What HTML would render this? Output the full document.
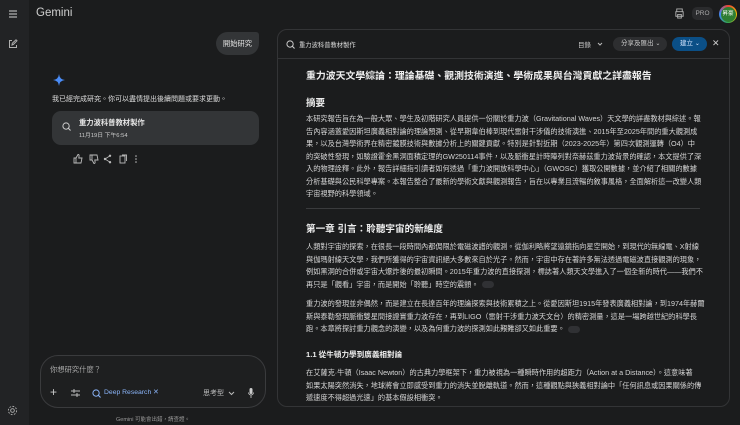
<!DOCTYPE html>
<html><head><meta charset="utf-8"><style>
*{margin:0;padding:0;box-sizing:border-box}
body{width:740px;height:425px;background:#1b1c1d;color:#e3e3e3;font-family:"Liberation Sans","Noto Sans CJK TC",sans-serif;position:relative;overflow:hidden}
.a{position:absolute;white-space:nowrap}
.sb{position:absolute;left:0;top:0;width:29px;height:425px;background:#222325}
.l{position:absolute;left:306px;font-size:7.2px;line-height:12.5px;white-space:nowrap;color:#d6d6d6}
.chip{display:inline-block;width:12px;height:7px;border-radius:4px;background:#303134;vertical-align:middle;margin-left:3px}
svg{position:absolute}
</style></head><body>
<div class="sb"></div>
<svg style="left:8px;top:9px" width="10" height="10" viewBox="0 0 10 10"><path d="M1 2h8M1 5h8M1 8h8" stroke="#b0b0b0" stroke-width="1.2"/></svg>
<svg style="left:8px;top:39px" width="10" height="10" viewBox="0 0 10 10"><path d="M4 1.5H1.5v7h7V6M4 6l.3-1.8L8 .8l1 1-3.6 3.6z" stroke="#b0b0b0" fill="none" stroke-width="1"/></svg>
<svg style="left:7px;top:405px" width="11" height="11" viewBox="0 0 12 12"><circle cx="6" cy="6" r="2" stroke="#b0b0b0" fill="none"/><circle cx="6" cy="6" r="4.5" stroke="#b0b0b0" fill="none" stroke-dasharray="2 1.5"/></svg>
<div class="a" style="left:36px;top:7px;font-size:11.5px;color:#d0d0d0">Gemini</div>
<svg style="left:674px;top:8px" width="11" height="11" viewBox="0 0 12 12"><path d="M3 4V1h6v3M2 4h8v5H2zM4 7h4v4H4z" stroke="#b0b0b0" fill="none"/></svg>
<div class="a" style="left:692px;top:7px;width:21px;height:13px;border-radius:5px;background:#2a2b2d;font-size:6.5px;line-height:13px;text-align:center;color:#aaa">PRO</div>
<div class="a" style="left:719px;top:5px;width:18px;height:18px;border-radius:50%;background:conic-gradient(#ea4335,#fbbc05,#34a853,#4285f4,#ea4335)"></div>
<div class="a" style="left:720.5px;top:6.5px;width:15px;height:15px;border-radius:50%;background:#2e7d32;font-size:5.5px;line-height:15px;text-align:center;color:#fff">昇豪</div>

<div class="a" style="left:216px;top:32px;width:43px;height:23px;border-radius:12px 3px 12px 12px;background:#333537;font-size:7.3px;line-height:23px;text-align:center">開始研究</div>
<svg style="left:53px;top:74px" width="12" height="12" viewBox="0 0 12 12"><path d="M6 0Q6.5 5.5 12 6Q6.5 6.5 6 12Q5.5 6.5 0 6Q5.5 5.5 6 0z" fill="#4a8cf7"/></svg>
<div class="a" style="left:52px;top:94px;font-size:7px;color:#ddd">我已經完成研究。你可以盡情提出後續問題或要求更動。</div>
<div class="a" style="left:52px;top:111px;width:207px;height:34px;border-radius:9px;background:#333537"></div>
<svg style="left:62px;top:122px" width="9" height="9" viewBox="0 0 10 10"><circle cx="4.5" cy="4.5" r="3.5" stroke="#ccc" fill="none" stroke-width="1.1"/><path d="M7 7l2.5 2.5" stroke="#ccc" stroke-width="1.2"/></svg>
<div class="a" style="left:79px;top:118px;font-size:7.3px;font-weight:bold;color:#e6e6e6">重力波科普教材製作</div>
<div class="a" style="left:79px;top:130px;font-size:5.8px;color:#ccc">11月19日 下午6:54</div>
<svg style="left:73px;top:154px" width="70" height="10" viewBox="0 0 70 10"><path d="M1 4h2v5H1zM3 4l2-3.5c1 0 1.3.6 1 2L5.8 4H9l-1 5H3" stroke="#bbb" fill="none" stroke-width=".9"/><path d="M17 1h2v5h-2zM19 6l2 3.5c1 0 1.3-.6 1-2L21.8 6H25l-1-5h-5" stroke="#bbb" fill="none" stroke-width=".9"/><circle cx="32" cy="5" r="1.2" fill="#bbb"/><circle cx="37" cy="1.8" r="1.2" fill="#bbb"/><circle cx="37" cy="8.2" r="1.2" fill="#bbb"/><path d="M32 5l5-3.2M32 5l5 3.2" stroke="#bbb" stroke-width=".8"/><rect x="47" y="2" width="5" height="7" stroke="#bbb" fill="none" stroke-width=".9"/><path d="M49 1h4.5v6" stroke="#bbb" fill="none" stroke-width=".9"/><circle cx="63" cy="2" r=".8" fill="#bbb"/><circle cx="63" cy="5" r=".8" fill="#bbb"/><circle cx="63" cy="8" r=".8" fill="#bbb"/></svg>

<div class="a" style="left:40px;top:355px;width:226px;height:53px;border-radius:18px;border:1px solid #3a3b3d;background:#1e1f20"></div>
<div class="a" style="left:50px;top:365px;font-size:7.3px;color:#a8a8a8">你想研究什麼？</div>
<div class="a" style="left:50px;top:385px;font-size:12px;color:#ccc">+</div>
<svg style="left:71px;top:389px" width="9" height="8" viewBox="0 0 9 8"><path d="M0 2h9M0 6h9" stroke="#bbb"/><path d="M3 0v4M6 4v4" stroke="#bbb"/></svg>
<svg style="left:92px;top:389px" width="9" height="9" viewBox="0 0 10 10"><circle cx="4.5" cy="4.5" r="3.5" stroke="#8ab4f8" fill="none" stroke-width="1.1"/><path d="M7 7l2.5 2.5" stroke="#8ab4f8" stroke-width="1.2"/></svg>
<div class="a" style="left:104px;top:389px;font-size:6.8px;color:#8ab4f8">Deep Research</div>
<div class="a" style="left:153px;top:388px;font-size:7px;color:#8ab4f8">✕</div>
<div class="a" style="left:203px;top:388px;font-size:7px;color:#bbb">思考型</div>
<svg style="left:228px;top:391px" width="7" height="5" viewBox="0 0 7 5"><path d="M1 1l2.5 2.5L6 1" stroke="#bbb" fill="none"/></svg>
<svg style="left:248px;top:388px" width="6" height="10" viewBox="0 0 6 10"><rect x="1.5" y="0" width="3" height="6" rx="1.5" fill="#ccc"/><path d="M.5 4.5a2.5 2.5 0 005 0M3 7v3" stroke="#ccc" fill="none" stroke-width=".8"/></svg>
<div class="a" style="left:116px;top:415px;font-size:5.5px;color:#999">Gemini 可能會出錯，請查證。</div>

<div class="a" style="left:277px;top:29px;width:453px;height:378px;border-radius:10px;border:1px solid #333436;background:#1b1c1d"></div>
<div class="a" style="left:278px;top:58px;width:451px;height:1px;background:#333436"></div>
<svg style="left:286px;top:40px" width="9" height="9" viewBox="0 0 10 10"><circle cx="4.5" cy="4.5" r="3.5" stroke="#ccc" fill="none" stroke-width="1.1"/><path d="M7 7l2.5 2.5" stroke="#ccc" stroke-width="1.2"/></svg>
<div class="a" style="left:299px;top:40px;font-size:6.3px;color:#ddd">重力波科普教材製作</div>
<div class="a" style="left:578px;top:39px;font-size:6.5px;color:#ccc">目錄</div>
<svg style="left:597px;top:42px" width="6" height="4" viewBox="0 0 6 4"><path d="M1 1l2 2 2-2" stroke="#bbb" fill="none"/></svg>
<div class="a" style="left:613px;top:37px;width:54px;height:14px;border-radius:7px;background:#2d2e30;font-size:6.5px;line-height:14px;padding-left:8px;color:#ccc">分享及匯出 <span style="font-size:6px">⌄</span></div>
<div class="a" style="left:672px;top:37px;width:35px;height:14px;border-radius:7px;background:#0b4f86;font-size:6.5px;line-height:14px;padding-left:8px;color:#d6e6ff">建立 <span style="font-size:6px">⌄</span></div>
<div class="a" style="left:712px;top:38px;font-size:9px;color:#ccc">✕</div>

<div class="a" style="left:306px;top:68px;font-size:9.9px;font-weight:bold;color:#eee">重力波天文學綜論：理論基礎、觀測技術演進、學術成果與台灣貢獻之詳盡報告</div>
<div class="a" style="left:306px;top:95px;font-size:9.5px;font-weight:bold;color:#eee">摘要</div>
<div class="l" style="top:113px">本研究報告旨在為一般大眾、學生及初階研究人員提供一份關於重力波（Gravitational Waves）天文學的詳盡教材與綜述。報</div>
<div class="l" style="top:125.5px">告內容涵蓋愛因斯坦廣義相對論的理論預測、從早期韋伯棒到現代雷射干涉儀的技術演進、2015年至2025年間的重大觀測成</div>
<div class="l" style="top:138px">果，以及台灣學術界在精密鍍膜技術與數據分析上的關鍵貢獻。特別是針對近期（2023-2025年）第四次觀測運轉（O4）中</div>
<div class="l" style="top:150.5px">的突破性發現，如驗證霍金黑洞面積定理的GW250114事件，以及脈衝星計時陣列對奈赫茲重力波背景的確認，本文提供了深</div>
<div class="l" style="top:163px">入的物理詮釋。此外，報告詳細指引讀者如何透過「重力波開放科學中心」（GWOSC）獲取公開數據，並介紹了相關的數據</div>
<div class="l" style="top:175.5px">分析基礎與公民科學專案。本報告整合了最新的學術文獻與觀測報告，旨在以專業且流暢的敘事風格，全面解析這一改變人類</div>
<div class="l" style="top:188px">宇宙視野的科學領域。</div>
<div class="a" style="left:306px;top:208px;width:394px;height:1px;background:#3a3b3d"></div>
<div class="a" style="left:306px;top:221px;font-size:9.6px;font-weight:bold;color:#eee">第一章 引言：聆聽宇宙的新維度</div>
<div class="l" style="top:241px">人類對宇宙的探索，在很長一段時間內都侷限於電磁波譜的觀測。從伽利略將望遠鏡指向星空開始，到現代的無線電、X射線</div>
<div class="l" style="top:253.5px">與伽瑪射線天文學，我們所獲得的宇宙資訊絕大多數來自於光子。然而，宇宙中存在著許多無法透過電磁波直接觀測的現象，</div>
<div class="l" style="top:266px">例如黑洞的合併或宇宙大爆炸後的最初瞬間。2015年重力波的直接探測，標誌著人類天文學進入了一個全新的時代——我們不</div>
<div class="l" style="top:278.5px">再只是「觀看」宇宙，而是開始「聆聽」時空的震顫。<span class="chip"></span></div>
<div class="l" style="top:298px">重力波的發現並非偶然，而是建立在長達百年的理論探索與技術累積之上。從愛因斯坦1915年發表廣義相對論，到1974年赫爾</div>
<div class="l" style="top:310.5px">斯與泰勒發現脈衝雙星間接證實重力波存在，再到LIGO（雷射干涉重力波天文台）的精密測量，這是一場跨越世紀的科學長</div>
<div class="l" style="top:323px">跑。本章將探討重力觀念的演變，以及為何重力波的探測如此艱難卻又如此重要。<span class="chip"></span></div>
<div class="a" style="left:306px;top:349px;font-size:7.6px;font-weight:bold;color:#eee">1.1 從牛頓力學到廣義相對論</div>
<div class="l" style="top:367px">在艾薩克·牛頓（Isaac Newton）的古典力學框架下，重力被視為一種瞬時作用的超距力（Action at a Distance）。這意味著</div>
<div class="l" style="top:379.5px">如果太陽突然消失，地球將會立即感受到重力的消失並脫離軌道。然而，這種觀點與狹義相對論中「任何訊息或因果關係的傳</div>
<div class="l" style="top:392px">遞速度不得超過光速」的基本假設相衝突。</div>
</body></html>
